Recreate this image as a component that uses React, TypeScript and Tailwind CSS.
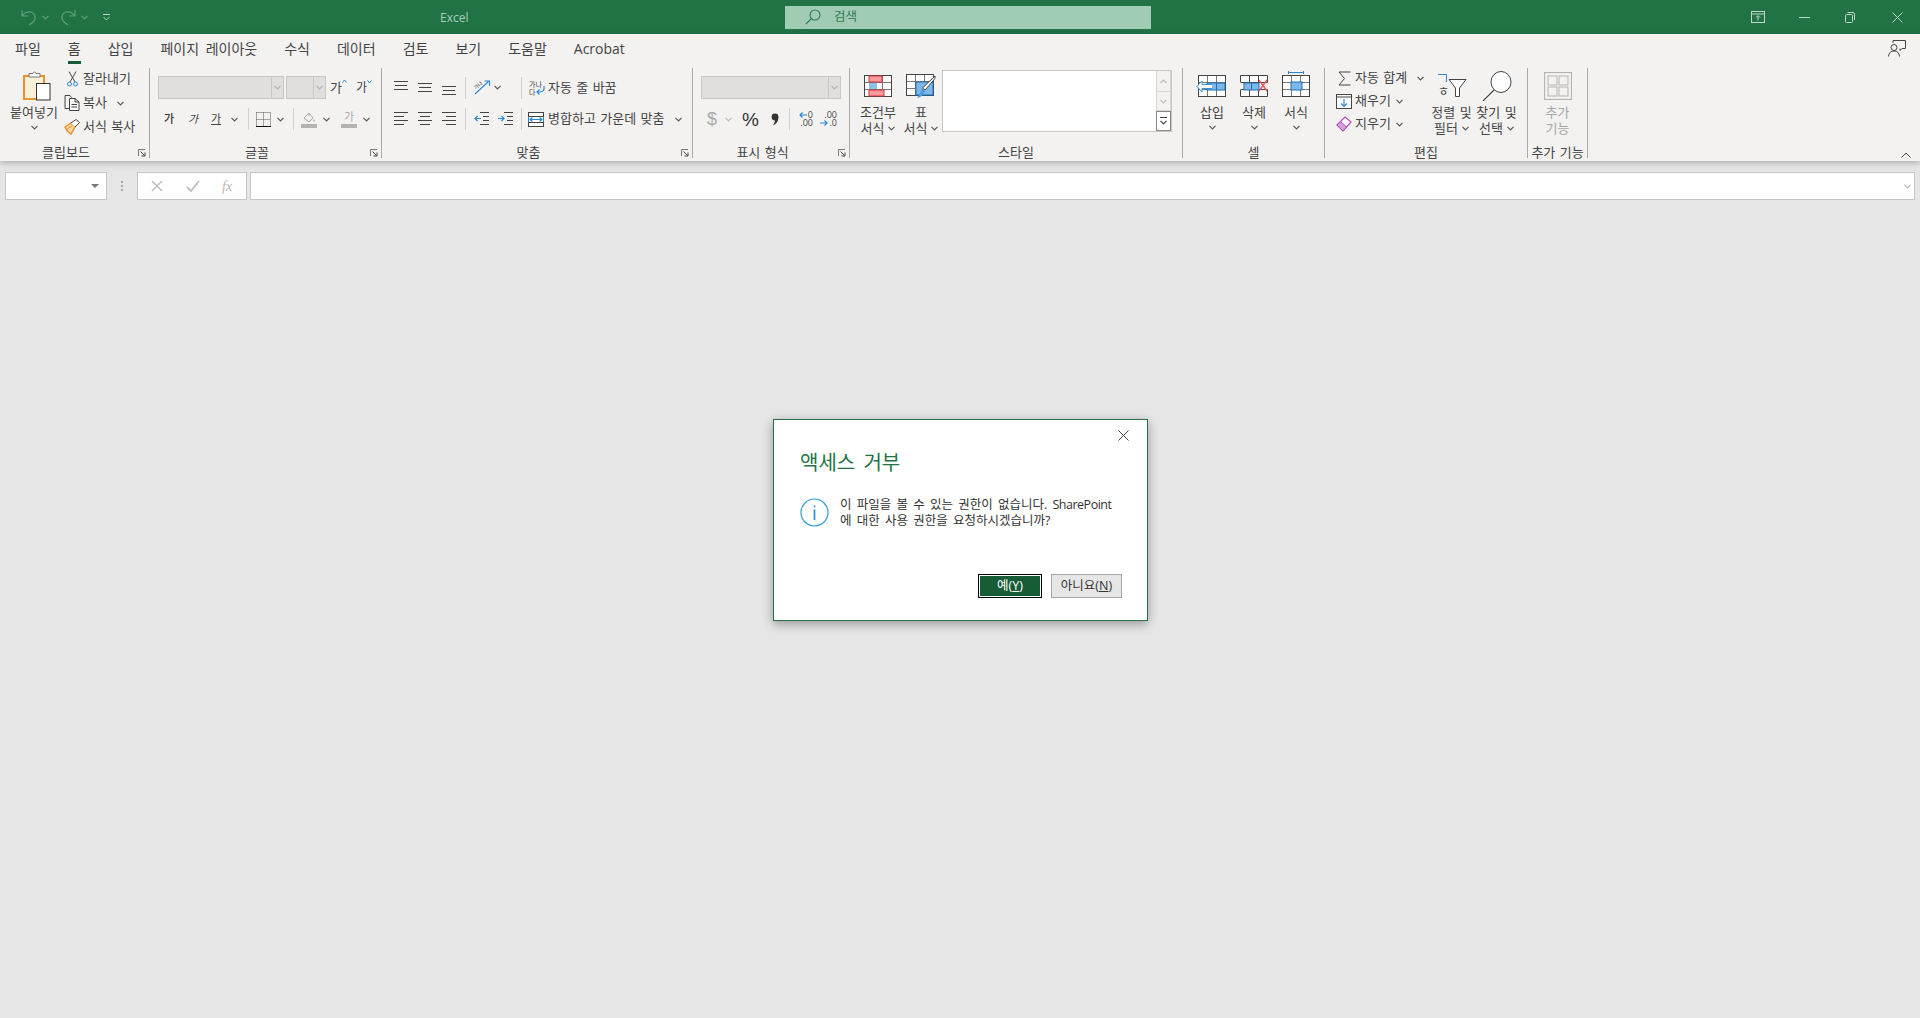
import React from 'react';

const tabs = ['파일', '홈', '삽입', '페이지 레이아웃', '수식', '데이터', '검토', '보기', '도움말', 'Acrobat'];

function Chev({ className = '', color = '#555' }: { className?: string; color?: string }) {
  return (
    <svg width="7" height="5" viewBox="0 0 7 5" className={`shrink-0 ${className}`}>
      <path d="M0.5 0.8 L3.5 3.8 L6.5 0.8" fill="none" stroke={color} strokeWidth="1.2" />
    </svg>
  );
}

function Launcher() {
  return (
    <svg width="8" height="8" viewBox="0 0 8 8" className="absolute right-[3px] bottom-[1px]">
      <path d="M0.5 7 V0.5 H7" fill="none" stroke="#777" />
      <path d="M2.5 2.5 L6.5 6.5 M7 3.5 V7 H3.5" fill="none" stroke="#444" />
    </svg>
  );
}

function Group({ w, label, launcher, children }: { w: string; label: string; launcher?: boolean; children: React.ReactNode }) {
  return (
    <div className={`relative flex h-[90px] shrink-0 flex-col border-r border-[#a8a8a8] ${w}`}>
      <div className="flex h-[78px]">{children}</div>
      <div className={`h-[12px] text-center text-[13px] leading-[12px] ${launcher ? 'pr-[17px]' : ''}`}>{label}</div>
      {launcher && <Launcher />}
    </div>
  );
}

function Big({ icon, lines, chev, w = 'w-[42px]', muted }: { icon: React.ReactNode; lines: string[]; chev?: 'line' | 'below'; w?: string; muted?: boolean }) {
  return (
    <div className={`flex shrink-0 flex-col items-center leading-[16px] ${w} ${muted ? 'text-[#a6a6a6]' : ''}`}>
      <div className="flex h-[36px] w-full items-end justify-center">{icon}</div>
      {lines.map((l, i) => (
        <div key={l} className="flex items-center gap-[4px] whitespace-nowrap">
          {l}
          {chev === 'line' && i === lines.length - 1 && <Chev />}
        </div>
      ))}
      {chev === 'below' && <Chev className="mt-[5px]" />}
    </div>
  );
}

function Sep({ className = '' }: { className?: string }) {
  return <div className={`h-[22px] w-px shrink-0 bg-[#d2d0ce] ${className}`} />;
}

function Lines({ rows }: { rows: [number, number, number][] }) {
  return (
    <svg width="15" height="16" viewBox="0 0 15 16" className="shrink-0">
      {rows.map(([y, a, b]) => (
        <path key={y} d={`M${a} ${y + 0.5} H${b}`} stroke="#444" />
      ))}
    </svg>
  );
}

function Combo({ w }: { w: string }) {
  return (
    <div className={`flex h-[23px] shrink-0 border border-[#c8c6c4] bg-[#e1dfdd] ${w}`}>
      <div className="flex-1" />
      <div className="flex w-[12px] items-center justify-center border-l border-[#c8c6c4]">
        <Chev color="#b0b0b0" />
      </div>
    </div>
  );
}

function Grid({ children, color = '#444' }: { children?: React.ReactNode; color?: string }) {
  return (
    <svg width="28" height="22" viewBox="0 0 28 22" className="mb-[7px] shrink-0 overflow-visible">
      <rect x="0.5" y="0.5" width="27" height="21" fill="#fff" stroke={color} />
      <path d="M9.5 1 V21 M18.5 1 V21 M1 7.5 H27 M1 14.5 H27" stroke="#777" />
      {children}
    </svg>
  );
}

function Row({ icon, text, chev, chevGap = 'ml-[5px]', h = 'h-[22px]' }: { icon: React.ReactNode; text: string; chev?: boolean; chevGap?: string; h?: string }) {
  return (
    <div className={`flex items-center whitespace-nowrap ${h}`}>
      <div className="mr-[3px] flex w-[16px] shrink-0 items-center justify-center">{icon}</div>
      {text}
      {chev && <Chev className={chevGap} />}
    </div>
  );
}

function Clipboard() {
  return (
    <Group w="w-[150px]" label="클립보드" launcher>
      <div className="ml-[4px] w-[60px]">
        <Big
          w="w-[60px]"
          chev="below"
          lines={['붙여넣기']}
          icon={
            <svg width="28" height="30" viewBox="0 0 28 30" className="mb-[3px] ml-[5px]">
              <path d="M1 5 H21 V28 H1 Z" fill="#fdf0d8" stroke="#e8912d" strokeWidth="2" />
              <path d="M6 6 V2.5 H10 L11.5 0.7 L13 2.5 H17 V6 Z" fill="#fff" stroke="#777" />
              <rect x="13.5" y="12.5" width="13.5" height="16.5" fill="#fff" stroke="#333" />
            </svg>
          }
        />
      </div>
      <div className="flex flex-col gap-[2px]">
        <Row
          text="잘라내기"
          icon={
            <svg width="11" height="16" viewBox="0 0 11 16">
              <path d="M2 0.5 L8 11 M9 0.5 L3 11" stroke="#444" fill="none" />
              <circle cx="2.5" cy="13" r="2" fill="none" stroke="#2b88d8" />
              <circle cx="8.5" cy="13" r="2" fill="none" stroke="#2b88d8" />
            </svg>
          }
        />
        <Row
          text="복사"
          chev
          chevGap="ml-[10px]"
          icon={
            <svg width="16" height="16" viewBox="0 0 16 16">
              <path d="M5 13.5 H1 V0.5 H6 L7.5 2.5" fill="none" stroke="#444" />
              <path d="M5.5 3.5 H11 L15 7 V15.5 H5.5 Z M11 3.5 V7 H15 M7.5 9.5 H13 M7.5 12 H13" fill="#f8f8f8" stroke="#444" />
            </svg>
          }
        />
        <Row
          text="서식 복사"
          icon={
            <svg width="16" height="16" viewBox="0 0 16 16">
              <path d="M1 8 L7 4 L11 8 L7 15 Q3 13 1 8 Z" fill="#fbd9a5" stroke="#e8912d" strokeWidth="1.4" />
              <path d="M7 4 L12 0.5 L15.5 3.5 L11 8" fill="#fff" stroke="#444" />
              <path d="M3 10 L8 7" stroke="#e8912d" />
            </svg>
          }
        />
      </div>
    </Group>
  );
}

function Font() {
  return (
    <Group w="w-[232px]" label="글꼴" launcher>
      <div className="flex flex-col pt-[8px]">
        <div className="flex items-center">
          <Combo w="ml-[8px] w-[126px]" />
          <Combo w="ml-[2px] w-[40px]" />
          <span className="ml-[4px] flex text-[13px]">
            가<svg width="5" height="4" viewBox="0 0 5 4" className="mt-[1px]"><path d="M0.5 3.5 L2.5 1 L4.5 3.5" fill="none" stroke="#2b88d8" /></svg>
          </span>
          <span className="ml-[9px] flex text-[12px]">
            가<svg width="5" height="4" viewBox="0 0 5 4" className="mt-[1px]"><path d="M0.5 0.5 L2.5 3 L4.5 0.5" fill="none" stroke="#2b88d8" /></svg>
          </span>
        </div>
        <div className="mt-[9px] flex h-[22px] items-center text-[11px]">
          <span className="ml-[14px] w-[11px] font-medium text-[#333]">가</span>
          <span className="ml-[13px] w-[11px] italic">가</span>
          <span className="ml-[12px] w-[11px] underline">가</span>
          <Chev className="ml-[9px]" />
          <Sep className="ml-[10px]" />
          <svg width="15" height="15" viewBox="0 0 15 15" className="ml-[7px] shrink-0">
            <path d="M0.5 0.5 H14.5 M0.5 0.5 V14.5 M14.5 0.5 V14.5 M7.5 0.5 V14.5 M0.5 7.5 H14.5" stroke="#555" strokeDasharray="1 1" fill="none" />
            <path d="M0 14.5 H15" stroke="#111" />
          </svg>
          <Chev className="ml-[6px]" />
          <Sep className="ml-[9px]" />
          <svg width="16" height="17" viewBox="0 0 16 17" className="ml-[7px] shrink-0">
            <path d="M3 7 L8 2 L12 7 L8 11 Z M8 2 V5" fill="none" stroke="#aaa" />
            <path d="M13 8 Q14.5 10 13 11 Q11.5 10 13 8" fill="#aaa" />
            <rect y="13" width="16" height="4" fill="#b5b3b1" />
          </svg>
          <Chev className="ml-[6px]" />
          <div className="relative ml-[11px] flex h-[18px] w-[16px] shrink-0 flex-col items-center text-[#aaa]">
            <span className="leading-[13px]">가</span>
            <span className="mt-[1px] h-[4px] w-[16px] bg-[#b5b3b1]" />
          </div>
          <Chev className="ml-[6px]" />
        </div>
      </div>
    </Group>
  );
}

function Alignment() {
  return (
    <Group w="w-[311px]" label="맞춤" launcher>
      <div className="flex flex-col pt-[8px]">
        <div className="flex h-[23px] items-center pl-[12px]">
          <Lines rows={[[1, 0, 14], [5, 1, 13], [9, 0, 14]]} />
          <div className="ml-[9px]"><Lines rows={[[3, 0, 14], [7, 1, 13], [11, 0, 14]]} /></div>
          <div className="ml-[9px]"><Lines rows={[[6, 0, 14], [10, 1, 13], [14, 0, 14]]} /></div>
          <Sep className="ml-[8px]" />
          <svg width="18" height="15" viewBox="0 0 18 15" className="ml-[7px] shrink-0">
            <path d="M2 14 L16 1 M11.5 1 H16.5 V6" fill="none" stroke="#2b88d8" strokeWidth="1.1" />
            <text x="1" y="9" fontSize="5" fill="#444" transform="rotate(-40 3 7)">가나</text>
          </svg>
          <Chev className="ml-[3px]" />
          <Sep className="ml-[20px]" />
          <div className="ml-[7px] flex items-center whitespace-nowrap">
            <svg width="17" height="16" viewBox="0 0 17 16" className="mr-[2px] shrink-0">
              <text x="0" y="6.5" fontSize="7" fill="#444">가나</text>
              <text x="0" y="14.5" fontSize="7" fill="#444">다</text>
              <path d="M15 6 Q16 12 11 12 H8 M10.5 9.5 L8 12 L10.5 14.5" fill="none" stroke="#2b88d8" strokeWidth="1.2" />
            </svg>
            자동 줄 바꿈
          </div>
        </div>
        <div className="mt-[9px] flex h-[22px] items-center pl-[12px]">
          <Lines rows={[[1, 0, 14], [5, 0, 10], [9, 0, 14], [13, 0, 10]]} />
          <div className="ml-[9px]"><Lines rows={[[1, 0, 14], [5, 2, 12], [9, 0, 14], [13, 2, 12]]} /></div>
          <div className="ml-[9px]"><Lines rows={[[1, 0, 14], [5, 4, 14], [9, 0, 14], [13, 4, 14]]} /></div>
          <Sep className="ml-[8px]" />
          <svg width="15" height="14" viewBox="0 0 15 14" className="ml-[8px] shrink-0">
            <path d="M6 0.5 H15 M9 4.5 H15 M9 8.5 H15 M6 12.5 H15" stroke="#444" />
            <path d="M7 6.5 H1 M3.5 4 L1 6.5 L3.5 9" stroke="#2b88d8" fill="none" strokeWidth="1.2" />
          </svg>
          <svg width="15" height="14" viewBox="0 0 15 14" className="ml-[9px] shrink-0">
            <path d="M6 0.5 H15 M9 4.5 H15 M9 8.5 H15 M6 12.5 H15" stroke="#444" />
            <path d="M0 6.5 H6 M3.5 4 L6 6.5 L3.5 9" stroke="#2b88d8" fill="none" strokeWidth="1.2" />
          </svg>
          <Sep className="ml-[8px]" />
          <div className="ml-[6px] flex items-center whitespace-nowrap">
            <svg width="16" height="15" viewBox="0 0 16 15" className="mr-[4px] shrink-0">
              <rect x="0.5" y="0.5" width="15" height="14" fill="#fff" stroke="#444" />
              <path d="M1 4.5 H15 M1 10.5 H15" stroke="#444" />
              <rect x="1" y="5" width="14" height="5" fill="#fff" />
              <path d="M0.5 5 V10 M15.5 5 V10" stroke="#2b88d8" />
              <path d="M2 7.5 H14 M4.5 5.5 L2 7.5 L4.5 9.5 M11.5 5.5 L14 7.5 L11.5 9.5" fill="none" stroke="#2b88d8" strokeWidth="1.1" />
            </svg>
            병합하고 가운데 맞춤
            <Chev className="ml-[11px]" />
          </div>
        </div>
      </div>
    </Group>
  );
}

function NumberFormat() {
  return (
    <Group w="w-[157px]" label="표시 형식" launcher>
      <div className="flex flex-col pt-[8px]">
        <Combo w="ml-[8px] w-[140px]" />
        <div className="mt-[9px] flex h-[22px] items-center">
          <span className="ml-[14px] w-[9px] font-['Liberation_Sans',sans-serif] text-[18px] leading-none text-[#aaa]">$</span>
          <Chev className="ml-[9px]" color="#bbb" />
          <span className="ml-[10px] w-[16px] font-['Liberation_Sans',sans-serif] text-[19px] leading-none text-[#333]">%</span>
          <svg width="8" height="13" viewBox="0 0 8 13" className="ml-[13px] shrink-0">
            <circle cx="4" cy="4" r="3.4" fill="#333" />
            <path d="M7.3 4 Q7.5 10 2 12.5 Q4.5 9 4 6" fill="#333" />
          </svg>
          <Sep className="ml-[10px]" />
          <div className="ml-[7px] flex w-[16px] shrink-0 flex-col items-end text-[9px] leading-[8px]">
            <div className="flex items-center gap-[1px]">
              <svg width="8" height="8" viewBox="0 0 8 8"><path d="M8 4 H1 M3.5 1.5 L1 4 L3.5 6.5" fill="none" stroke="#2b88d8" strokeWidth="1.2" /></svg>
              0
            </div>
            <div>.00</div>
          </div>
          <div className="ml-[8px] flex w-[16px] shrink-0 flex-col items-end text-[9px] leading-[8px]">
            <div>.00</div>
            <div className="flex items-center gap-[1px]">
              <svg width="8" height="8" viewBox="0 0 8 8"><path d="M0 4 H7 M4.5 1.5 L7 4 L4.5 6.5" fill="none" stroke="#2b88d8" strokeWidth="1.2" /></svg>
              .0
            </div>
          </div>
        </div>
      </div>
    </Group>
  );
}

function Styles() {
  return (
    <Group w="w-[333px]" label="스타일">
      <div className="ml-[6px] flex">
        <Big
          w="w-[44px]"
          chev="line"
          lines={['조건부', '서식']}
          icon={
            <Grid>
              <rect x="5" y="1" width="13" height="6" fill="#ff9a9f" stroke="#d13438" />
              <rect x="5" y="8" width="8" height="6" fill="#8ac0ec" />
              <rect x="5" y="15" width="15" height="6" fill="#ff9a9f" stroke="#d13438" />
            </Grid>
          }
        />
        <Big
          w="w-[42px]"
          chev="line"
          lines={['표', '서식']}
          icon={
            <svg width="30" height="24" viewBox="0 0 30 24" className="mb-[6px]">
              <rect x="0.5" y="0.5" width="27" height="21" fill="#fff" stroke="#444" />
              <path d="M9.5 1 V21 M18.5 1 V21 M1 7.5 H27 M1 14.5 H27" stroke="#777" />
              <rect x="10" y="8" width="17" height="13" fill="#7fb8e8" stroke="#1e6fb8" />
              <path d="M29 2 Q30 4 27 7 L19 16 L16.5 14 Z" fill="#fff" stroke="#444" />
              <path d="M16 14.5 L19 17 Q17 23 11 24 Q14 20 16 14.5 Z" fill="#4a9fe0" />
            </svg>
          }
        />
      </div>
      <div className="mt-[2px] flex h-[62px] w-[230px] shrink-0 border border-[#c8c6c4] bg-white">
        <div className="flex-1" />
        <div className="flex w-[15px] flex-col bg-[#f3f2f1]">
          <div className="flex h-[20px] items-center justify-center border-x border-[#d8d6d4]">
            <svg width="7" height="5" viewBox="0 0 7 5"><path d="M0.5 4 L3.5 1 L6.5 4" fill="none" stroke="#bbb" strokeWidth="1.2" /></svg>
          </div>
          <div className="flex h-[20px] items-center justify-center border border-[#d8d6d4]">
            <Chev color="#bbb" />
          </div>
          <div className="flex flex-1 flex-col items-center justify-center gap-[2px] border border-[#8a8886] bg-white">
            <span className="h-px w-[7px] bg-[#444]" />
            <Chev color="#444" />
          </div>
        </div>
      </div>
    </Group>
  );
}

function Cells() {
  return (
    <Group w="w-[142px]" label="셀">
      <div className="ml-[8px] flex">
        <Big
          chev="below"
          lines={['삽입']}
          icon={
            <Grid>
              <rect x="9" y="8" width="18" height="7" fill="#7fb8e8" stroke="#1e6fb8" />
              <path d="M18.5 8 V15" stroke="#1e6fb8" />
              <path d="M14 9.5 H4 V6 L-1 11.5 L4 17 V13.5 H14" fill="#fff" stroke="#2b88d8" strokeWidth="0.9" />
            </Grid>
          }
        />
        <Big
          chev="below"
          lines={['삭제']}
          icon={
            <svg width="28" height="22" viewBox="0 0 28 22" className="mb-[7px]">
              <path d="M0.5 7.5 V0.5 H27.5 V7.5 H1 M0.5 14.5 V21.5 H27.5 V14.5 H1 M9.5 1 V7 M18.5 1 V7 M9.5 15 V21 M18.5 15 V21" fill="#fff" stroke="#444" />
              <rect x="4" y="8" width="15" height="7" fill="#7fb8e8" stroke="#1e6fb8" />
              <path d="M11.5 8 V15" stroke="#1e6fb8" />
              <path d="M19 5 L27 16 M27 5 L19 16" stroke="#f0555a" strokeWidth="1.4" />
            </svg>
          }
        />
        <Big
          chev="below"
          lines={['서식']}
          icon={
            <svg width="28" height="26" viewBox="0 0 28 26" className="mb-[7px]">
              <path d="M6.5 0 V3 M6.5 1.5 H21.5 M21.5 0 V3" stroke="#2b88d8" />
              <rect x="0.5" y="4.5" width="27" height="21" fill="#fff" stroke="#444" />
              <path d="M9.5 5 V25 M18.5 5 V25 M1 11.5 H27 M1 18.5 H27" stroke="#777" />
              <rect x="9" y="11" width="11" height="8" fill="#7fb8e8" stroke="#1e6fb8" />
            </svg>
          }
        />
      </div>
    </Group>
  );
}

function Editing() {
  return (
    <Group w="w-[203px]" label="편집">
      <div className="ml-[11px] -mt-[1px] flex w-[102px] shrink-0 flex-col gap-px">
        <Row
          text="자동 합계"
          chev
          chevGap="ml-[10px]"
          icon={
            <svg width="13" height="15" viewBox="0 0 13 15">
              <path d="M12.5 1 H1 L6.5 7.5 L1 14 H12.5" fill="none" stroke="#444" />
            </svg>
          }
        />
        <Row
          text="채우기"
          chev
          icon={
            <svg width="16" height="15" viewBox="0 0 16 15">
              <rect x="0.5" y="0.5" width="15" height="14" fill="#fff" stroke="#444" />
              <path d="M1 3 H15" stroke="#444" />
              <path d="M8 5 V12 M5 9.5 L8 12.5 L11 9.5" fill="none" stroke="#2b88d8" strokeWidth="1.2" />
            </svg>
          }
        />
        <Row
          text="지우기"
          chev
          icon={
            <svg width="16" height="16" viewBox="0 0 16 16">
              <path d="M1 9 L9 1 L15 6 L7 15 Z" fill="#fff" stroke="#b146c2" strokeWidth="1.2" />
              <path d="M1 9 L4.5 5.5 L10.5 11 L7 15 Z" fill="#d59dde" stroke="#b146c2" />
            </svg>
          }
        />
      </div>
      <div className="-ml-[9px] flex">
        <Big
          w="w-[45px]"
          chev="line"
          lines={['정렬 및', '필터']}
          icon={
            <svg width="30" height="23" viewBox="0 0 30 23" className="mb-[7px]">
              <path d="M1 0.5 H9.5 V8" fill="none" stroke="#2b88d8" />
              <text x="1" y="22" fontSize="12" fill="#444">ㅎ</text>
              <path d="M12 5.5 H29 L22.5 14 V22.5 H18.5 V14 Z" fill="#fff" stroke="#444" />
            </svg>
          }
        />
        <Big
          w="w-[45px]"
          chev="line"
          lines={['찾기 및', '선택']}
          icon={
            <svg width="30" height="30" viewBox="0 0 30 30" className="mb-[3px]">
              <ellipse cx="19" cy="11" rx="10" ry="10.5" fill="#fff" stroke="#444" />
              <path d="M12 19 L1 30" stroke="#444" strokeWidth="1.1" />
            </svg>
          }
        />
      </div>
    </Group>
  );
}

function AddIns() {
  return (
    <Group w="w-[60px]" label="추가 기능">
      <Big
        w="w-[59px]"
        muted
        lines={['추가', '기능']}
        icon={
          <svg width="28" height="28" viewBox="0 0 28 28" className="mb-[4px]">
            <rect x="0.5" y="0.5" width="27" height="27" fill="none" stroke="#b5b3b1" strokeWidth="1.2" />
            <rect x="4" y="4" width="9" height="9" fill="none" stroke="#b5b3b1" />
            <rect x="15" y="4" width="9" height="9" fill="none" stroke="#b5b3b1" />
            <rect x="4" y="15" width="9" height="9" fill="none" stroke="#b5b3b1" />
            <rect x="15" y="15" width="9" height="9" fill="none" stroke="#b5b3b1" />
          </svg>
        }
      />
    </Group>
  );
}

function TitleBar() {
  const dim = '#5f9f7d';
  const ctl = '#bcd8c8';
  return (
    <div className="flex h-[34px] shrink-0 items-center bg-[#217346]">
      <svg width="16" height="17" viewBox="0 0 16 17" className="ml-[21px] shrink-0">
        <path d="M1 1 V7 H7 M1.5 6.5 Q5 2 10 3 Q15 5 14 10 Q13 13 8 16" fill="none" stroke={dim} strokeWidth="1.2" />
      </svg>
      <Chev className="ml-[5px]" color={dim} />
      <svg width="16" height="17" viewBox="0 0 16 17" className="ml-[11px] shrink-0">
        <path d="M15 1 V7 H9 M14.5 6.5 Q11 2 6 3 Q1 5 2 10 Q3 13 8 16" fill="none" stroke={dim} strokeWidth="1.2" />
      </svg>
      <Chev className="ml-[5px]" color={dim} />
      <svg width="7" height="7" viewBox="0 0 7 7" className="ml-[15px] shrink-0">
        <path d="M0 0.5 H7 M0.5 3 L3.5 6 L6.5 3" fill="none" stroke="#bcd8c8" />
      </svg>
      <span className="ml-[330px] w-[345px] pt-[1px] text-[12px] text-[#a9cfba]">Excel</span>
      <div className="flex h-[23px] w-[366px] shrink-0 items-center bg-[#a0ccb3]">
        <svg width="16" height="16" viewBox="0 0 16 16" className="ml-[20px] shrink-0">
          <circle cx="10" cy="6" r="5" fill="none" stroke="#2f7a52" strokeWidth="1.1" />
          <path d="M6.5 9.5 L1 15" stroke="#2f7a52" strokeWidth="1.1" />
        </svg>
        <span className="ml-[13px] text-[12.5px] text-[#2f7a52]">검색</span>
      </div>
      <svg width="14" height="12" viewBox="0 0 14 12" className="ml-[600px] shrink-0">
        <rect x="0.5" y="0.5" width="13" height="11" fill="none" stroke={ctl} />
        <path d="M1 3 H13 M7 9.5 V5 M5 6.5 L7 4.5 L9 6.5" fill="none" stroke={ctl} />
      </svg>
      <span className="ml-[34px] h-px w-[11px] shrink-0 bg-[#bcd8c8]" />
      <svg width="10" height="11" viewBox="0 0 10 11" className="ml-[35px] shrink-0">
        <rect x="0.5" y="2.5" width="7" height="8" rx="1" fill="none" stroke={ctl} />
        <path d="M2.5 0.5 H8 Q9.5 0.5 9.5 2 V8" fill="none" stroke={ctl} />
      </svg>
      <svg width="11" height="11" viewBox="0 0 11 11" className="ml-[37px] shrink-0">
        <path d="M0.5 0.5 L10.5 10.5 M10.5 0.5 L0.5 10.5" stroke={ctl} />
      </svg>
    </div>
  );
}

function TabStrip() {
  return (
    <div className="relative flex h-[34px] shrink-0 items-center gap-[27px] pb-[5px] pl-[15px] text-[14px] [word-spacing:3px]">
      {tabs.map((t) => (
        <div key={t} className="relative whitespace-nowrap">
          {t}
          {t === '홈' && <span className="absolute -bottom-[5px] left-0 h-[3px] w-full bg-[#185c37]" />}
        </div>
      ))}
      <svg width="18" height="17" viewBox="0 0 18 17" className="absolute top-[6px] right-[14px]">
        <path d="M5 3 V0.5 H17.5 V8.5 H14 L12 10.5 V8.5" fill="none" stroke="#444" />
        <circle cx="6" cy="7.5" r="3" fill="none" stroke="#444" />
        <path d="M0.5 16.5 Q1 11 6 11 Q11 11 11.5 16.5" fill="none" stroke="#444" />
      </svg>
    </div>
  );
}

function FormulaBar() {
  return (
    <div className="mt-[11px] flex h-[28px] shrink-0 items-stretch pl-[5px]">
      <div className="flex w-[102px] shrink-0 items-center justify-end border border-[#c8c6c4] bg-white pr-[7px]">
        <span className="h-0 w-0 border-x-[4px] border-t-[4px] border-x-transparent border-t-[#777]" />
      </div>
      <div className="flex w-[30px] shrink-0 flex-col items-center justify-center gap-[2px]">
        <span className="h-[2px] w-[2px] bg-[#aaa]" />
        <span className="h-[2px] w-[2px] bg-[#aaa]" />
        <span className="h-[2px] w-[2px] bg-[#aaa]" />
      </div>
      <div className="flex w-[110px] shrink-0 items-center border border-[#c8c6c4] bg-white text-[#b8b8b8]">
        <svg width="12" height="12" viewBox="0 0 12 12" className="ml-[13px] shrink-0">
          <path d="M1 1 L11 11 M11 1 L1 11" stroke="#c0c0c0" strokeWidth="1.5" />
        </svg>
        <svg width="14" height="12" viewBox="0 0 14 12" className="ml-[23px] shrink-0">
          <path d="M1 7 L5 11 L13 1" fill="none" stroke="#c0c0c0" strokeWidth="2" />
        </svg>
        <span className="ml-[22px] font-['Liberation_Serif',serif] text-[14px] italic">fx</span>
      </div>
      <div className="ml-[3px] flex flex-1 items-center justify-end border border-[#c8c6c4] bg-white pr-[3px]">
        <Chev color="#bbb" />
      </div>
      <div className="w-[5px] shrink-0" />
    </div>
  );
}

function Dialog() {
  return (
    <div className="absolute top-[419px] left-[773px] flex h-[202px] w-[375px] flex-col border border-[#217346] bg-white pr-[25px] pl-[26px] shadow-[0_3px_10px_rgba(0,0,0,0.35)]">
      <svg width="11" height="11" viewBox="0 0 11 11" className="absolute top-[10px] right-[18px]">
        <path d="M0.5 0.5 L10.5 10.5 M10.5 0.5 L0.5 10.5" stroke="#444" />
      </svg>
      <div className="mt-[29px] text-[20px] leading-[28px] text-[#217346] [word-spacing:3px]">액세스 거부</div>
      <div className="mt-[20px] flex">
        <svg width="29" height="29" viewBox="0 0 29 29" className="mt-[1px] shrink-0">
          <circle cx="14.5" cy="14.5" r="13.5" fill="none" stroke="#2b9ad6" strokeWidth="1.2" />
          <rect x="13.6" y="11.5" width="1.8" height="10.5" fill="#2b9ad6" />
          <rect x="13.6" y="7.5" width="1.8" height="1.8" fill="#2b9ad6" />
        </svg>
        <div className="ml-[11px] w-[280px] text-[12.5px] leading-[16px] text-[#333] [word-spacing:2px]">
          <div className="whitespace-nowrap">이 파일을 볼 수 있는 권한이 없습니다. <span className="tracking-[-0.5px]">SharePoint</span></div>
          <div className="whitespace-nowrap">에 대한 사용 권한을 요청하시겠습니까?</div>
        </div>
      </div>
      <div className="mt-auto mb-[22px] flex justify-end gap-[9px] text-[12.5px]">
        <div className="flex h-[24px] w-[64px] items-center justify-center border border-black bg-[#185c37] text-white outline outline-1 -outline-offset-2 outline-white">
          예<span>(<u>Y</u>)</span>
        </div>
        <div className="flex h-[24px] w-[71px] items-center justify-center border border-[#a6a6a6] bg-[#e6e6e6] text-[#333]">
          아니요<span>(<u>N</u>)</span>
        </div>
      </div>
    </div>
  );
}

export default function App() {
  return (
    <div className="relative flex h-[1018px] w-[1920px] flex-col overflow-hidden bg-[#e6e6e6] font-['Open_Sans','Noto_Sans_CJK_KR',sans-serif] text-[13px] text-[#444]">
      <TitleBar />
      <div className="relative z-10 flex h-[127px] shrink-0 flex-col bg-[#f3f2f1] shadow-[0_2px_6px_rgba(0,0,0,0.25)]">
        <TabStrip />
        <div className="flex [word-spacing:1px]">
          <Clipboard />
          <Font />
          <Alignment />
          <NumberFormat />
          <Styles />
          <Cells />
          <Editing />
          <AddIns />
        </div>
        <svg width="10" height="6" viewBox="0 0 10 6" className="absolute right-[9px] bottom-[3px]">
          <path d="M0.5 5.5 L5 1 L9.5 5.5" fill="none" stroke="#444" />
        </svg>
      </div>
      <FormulaBar />
      <Dialog />
    </div>
  );
}
